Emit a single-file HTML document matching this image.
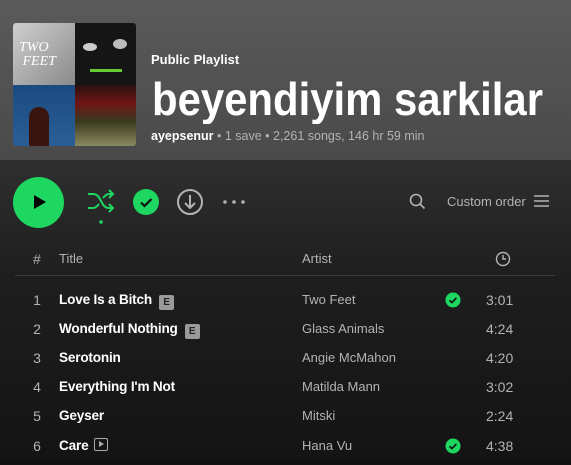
<!DOCTYPE html>
<html><head><meta charset="utf-8"><style>
*{margin:0;padding:0;box-sizing:border-box}
body{width:571px;height:459px;overflow:hidden;font-family:"Liberation Sans",sans-serif;background:#121212;position:relative;color:#fff}
.hdr{position:absolute;left:0;top:0;width:571px;height:160px;background:linear-gradient(180deg,#5a5a5a 0%,#4a4a4a 100%)}
.body{position:absolute;left:0;top:160px;width:571px;height:299px;background:linear-gradient(180deg,#2f2f2f 0%,#1e1e1e 40%,#141414 100%)}
.a{position:absolute}
.cover{left:13px;top:23px;width:123px;height:123px;border-radius:3px;overflow:hidden;display:grid;grid-template-columns:1fr 1fr;grid-template-rows:1fr 1fr}
.t{font-size:13px;white-space:nowrap}
.g{color:#b3b3b3}
.row{position:absolute;left:0;width:571px;height:29px}
.row span{position:absolute;top:0;line-height:20px;font-size:14px;white-space:nowrap}
.n{left:32px;color:#b3b3b3;width:10px;text-align:center}
.ti{left:59px;color:#fff;font-weight:bold;font-size:13.6px!important;letter-spacing:-0.2px}
.ar{left:302px;color:#b3b3b3;font-size:13px!important}
.du{left:486px;color:#b3b3b3}
.E{display:inline-block;width:15px;height:15px;background:#9a9a9a;color:#222;font-size:10px;text-align:center;line-height:15px;border-radius:2px;vertical-align:-1px;margin-left:7px}
</style></head><body>
<div class="hdr"></div><div class="body"></div>
<div class="a cover">
<div style="background:linear-gradient(135deg,#cfcfcf,#8a8a8a);position:relative"><span style="position:absolute;left:6px;top:18px;color:#fff;font-style:italic;font-size:14px;line-height:14px;font-family:'Liberation Serif',serif">TWO<br>&nbsp;FEET</span></div>
<div style="background:#151515;position:relative"><div style="position:absolute;left:8px;top:20px;width:14px;height:8px;background:#ccc;border-radius:50%"></div><div style="position:absolute;left:38px;top:16px;width:14px;height:10px;background:#bbb;border-radius:50%"></div><div style="position:absolute;left:15px;top:46px;width:32px;height:3px;background:#6c3"></div></div>
<div style="background:linear-gradient(180deg,#1a4a80,#2a5f95);position:relative"><div style="position:absolute;left:16px;top:22px;width:20px;height:40px;background:#3a1510;border-radius:10px 10px 2px 2px"></div></div>
<div style="background:linear-gradient(180deg,#2a1010 0%,#701515 30%,#3a3a20 60%,#8a8a60 100%)"></div>
</div>
<div class="a t" style="left:151px;top:52px;font-weight:bold">Public Playlist</div>
<svg class="a" style="left:150px;top:68px" width="400" height="56"><text x="2" y="47" fill="#fff" font-family="Liberation Sans" font-weight="bold" font-size="46" textLength="391" lengthAdjust="spacingAndGlyphs">beyendiyim sarkilar</text></svg>
<div class="a t g" style="left:151px;top:129px;font-size:12.5px"><b style="color:#fff">ayepsenur</b> • 1 save • 2,261 songs, 146 hr 59 min</div>
<div class="a" style="left:13px;top:177px;width:51px;height:51px;border-radius:50%;background:#1ed760"></div>
<svg class="a" style="left:32px;top:194px" width="16" height="16"><path d="M2 1 L14 8 L2 15Z" fill="#000"/></svg>
<svg class="a" style="left:85px;top:188px" width="32" height="38" fill="none" stroke="#1ed760" stroke-width="2"><path d="M3 6 h5 c4 0 6 3 8 7 s4 7 8 7 h4 M3 20 h5 c3 0 4-2 6-4 M18 10 c2-2 3-4 6-4 h4 M24 2 l4 4 -4 4 M24 16 l4 4 -4 4"/><circle cx="16" cy="34" r="1.8" fill="#1ed760" stroke="none"/></svg>
<div class="a" style="left:133px;top:189px;width:26px;height:26px;border-radius:50%;background:#1ed760"></div>
<svg class="a" style="left:133px;top:189px" width="26" height="26"><path d="M8 13.5 l3.5 3.5 l7-7" fill="none" stroke="#111" stroke-width="2.2"/></svg>
<svg class="a" style="left:176px;top:188px" width="28" height="28" fill="none" stroke="#b3b3b3" stroke-width="2"><circle cx="14" cy="14" r="12"/><path d="M14 7v13 M9 15l5 5 5-5"/></svg>
<svg class="a" style="left:222px;top:199px" width="24" height="6" fill="#b3b3b3"><circle cx="3" cy="3" r="1.8"/><circle cx="12" cy="3" r="1.8"/><circle cx="21" cy="3" r="1.8"/></svg>
<svg class="a" style="left:409px;top:193px" width="17" height="17" fill="none" stroke="#b3b3b3" stroke-width="1.6"><circle cx="7" cy="7" r="5.5"/><path d="M11 11l4.5 4.5"/></svg>
<div class="a t g" style="left:447px;top:194px">Custom order</div>
<svg class="a" style="left:534px;top:195px" width="15" height="12" stroke="#b3b3b3" stroke-width="1.5"><path d="M0 1h15M0 6h15M0 11h15"/></svg>
<div class="a t g" style="left:33px;top:251px;font-size:14px">#</div>
<div class="a t g" style="left:59px;top:251px">Title</div>
<div class="a t g" style="left:302px;top:251px">Artist</div>
<svg class="a" style="left:495px;top:251px" width="16" height="16" fill="none" stroke="#b3b3b3" stroke-width="1.4"><circle cx="8" cy="8" r="6.5"/><path d="M8 4v4h3"/></svg>
<div class="a" style="left:15px;top:275px;width:540px;height:1px;background:#3a3a3a"></div>
<div class="row" style="top:290px"><span class="n">1</span><span class="ti">Love Is a Bitch<i class="E" style="font-style:normal">E</i></span><span class="ar">Two Feet</span><span class="du">3:01</span></div>
<div class="row" style="top:319px"><span class="n">2</span><span class="ti">Wonderful Nothing<i class="E" style="font-style:normal">E</i></span><span class="ar">Glass Animals</span><span class="du">4:24</span></div>
<div class="row" style="top:348px"><span class="n">3</span><span class="ti">Serotonin</span><span class="ar">Angie McMahon</span><span class="du">4:20</span></div>
<div class="row" style="top:377px"><span class="n">4</span><span class="ti">Everything I'm Not</span><span class="ar">Matilda Mann</span><span class="du">3:02</span></div>
<div class="row" style="top:406px"><span class="n">5</span><span class="ti">Geyser</span><span class="ar">Mitski</span><span class="du">2:24</span></div>
<div class="row" style="top:436px"><span class="n">6</span><span class="ti">Care <i style="display:inline-block;width:14px;height:13px;border:1.5px solid #aaa;border-radius:2px;vertical-align:-1px;position:relative;margin-left:2px"><b style="position:absolute;left:3.5px;top:2px;border-left:5px solid #aaa;border-top:3.5px solid transparent;border-bottom:3.5px solid transparent"></b></i></span><span class="ar">Hana Vu</span><span class="du">4:38</span></div>
<svg class="a" style="left:445px;top:292px" width="16" height="16"><circle cx="8" cy="8" r="7.5" fill="#1ed760"/><path d="M4.5 8.3l2.3 2.3 4.6-4.6" fill="none" stroke="#111" stroke-width="1.6"/></svg>
<svg class="a" style="left:445px;top:438px" width="16" height="16"><circle cx="8" cy="8" r="7.5" fill="#1ed760"/><path d="M4.5 8.3l2.3 2.3 4.6-4.6" fill="none" stroke="#111" stroke-width="1.6"/></svg>
</body></html>
